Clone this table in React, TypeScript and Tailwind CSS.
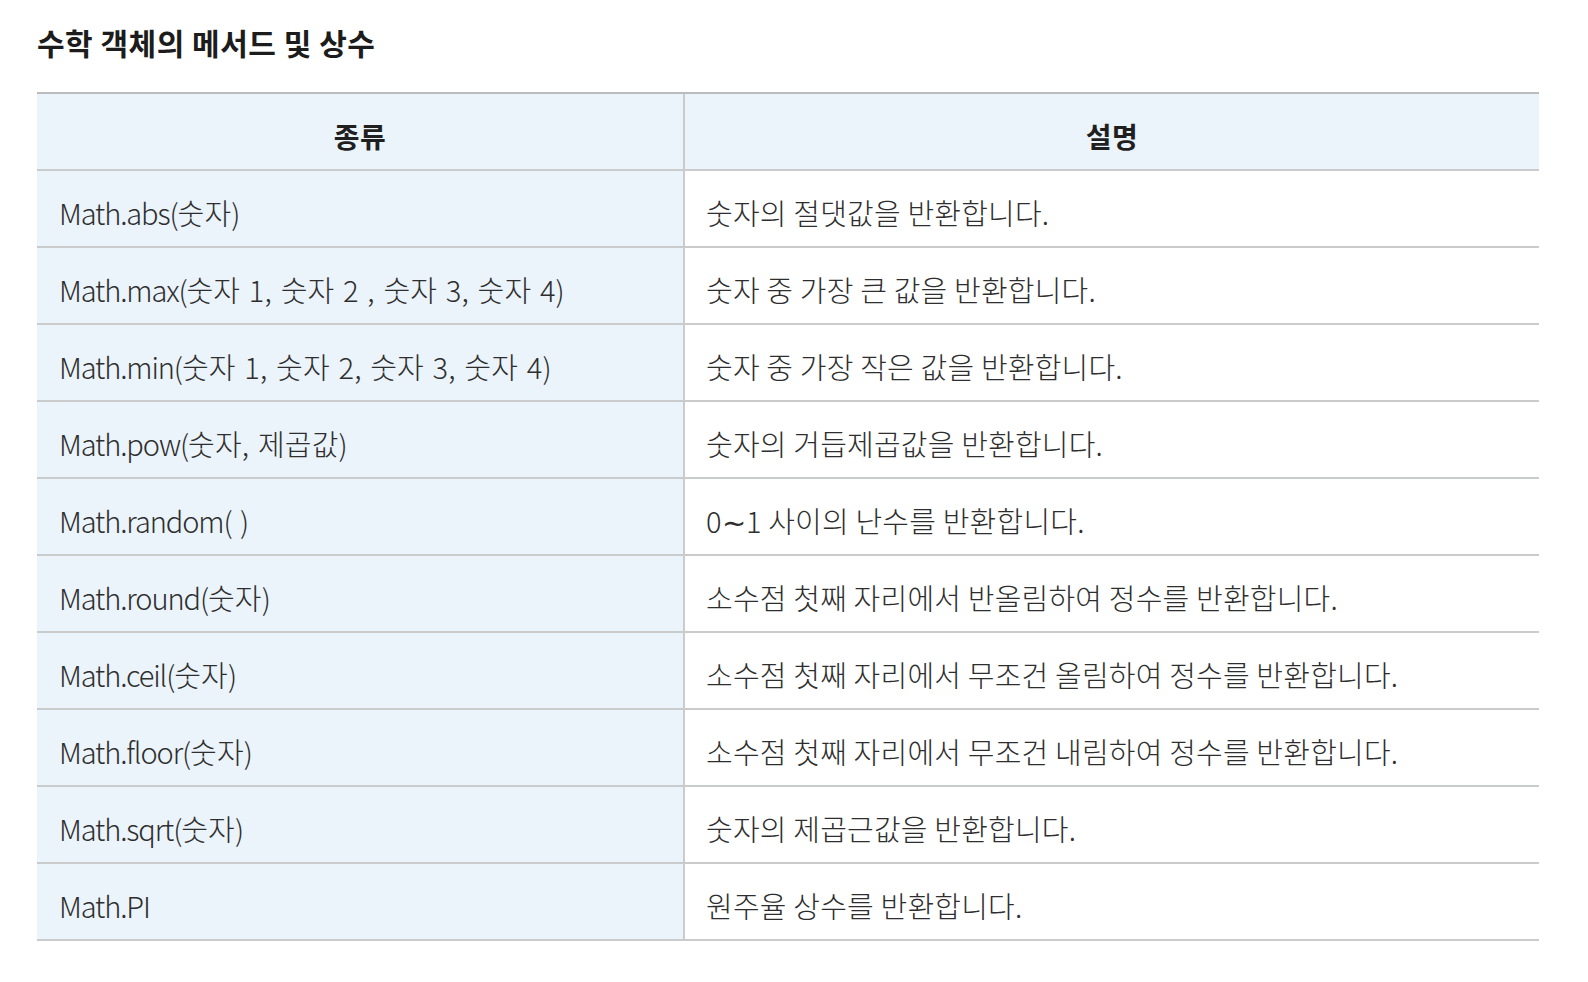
const rows: [string, string][] = [
  ["Math.abs(숫자)", "숫자의 절댓값을 반환합니다."],
  ["Math.max(숫자 1, 숫자 2 , 숫자 3, 숫자 4)", "숫자 중 가장 큰 값을 반환합니다."],
  ["Math.min(숫자 1, 숫자 2, 숫자 3, 숫자 4)", "숫자 중 가장 작은 값을 반환합니다."],
  ["Math.pow(숫자, 제곱값)", "숫자의 거듭제곱값을 반환합니다."],
  ["Math.random( )", "0∼1 사이의 난수를 반환합니다."],
  ["Math.round(숫자)", "소수점 첫째 자리에서 반올림하여 정수를 반환합니다."],
  ["Math.ceil(숫자)", "소수점 첫째 자리에서 무조건 올림하여 정수를 반환합니다."],
  ["Math.floor(숫자)", "소수점 첫째 자리에서 무조건 내림하여 정수를 반환합니다."],
  ["Math.sqrt(숫자)", "숫자의 제곱근값을 반환합니다."],
  ["Math.PI", "원주율 상수를 반환합니다."],
];

function MethodName({ name }: { name: string }) {
  const cut = name.indexOf("(");
  const head = cut === -1 ? name : name.slice(0, cut + 1);
  const rest = cut === -1 ? "" : name.slice(cut + 1);
  return (
    <span className="whitespace-pre">
      <span className="tracking-[-1.1px]">{head}</span>
      <span className="[word-spacing:2px]">{rest}</span>
    </span>
  );
}

export default function App() {
  return (
    <div className="min-h-[982px] w-full bg-white font-['Noto_Sans_CJK_KR','Noto_Sans',sans-serif]">
      <div className="pl-[37px] pr-[49px] pt-[22px]">
        <h1 className="h-[70px] text-[30px] font-bold leading-[40px] tracking-[0.5px] text-[#1c1c1c]">
          수학 객체의 메서드 및 상수
        </h1>
        <div className="border-t-2 border-[#b9bbbd]">
          <div className="flex h-[77px] border-b-2 border-[#c9cbcd] bg-[#ebf3fb]">
            <div className="flex w-[646px] items-center justify-center pt-2 text-[28px] font-bold tracking-[0.5px] text-[#1f1f1f]">
              종류
            </div>
            <div className="w-[2px] bg-[#c9cbcd]" />
            <div className="flex flex-1 items-center justify-center pt-2 text-[28px] font-bold tracking-[0.5px] text-[#1f1f1f]">
              설명
            </div>
          </div>
          {rows.map(([name, desc]) => (
            <div key={name} className="flex h-[77px] border-b-2 border-[#c9cbcd]">
              <div className="flex w-[646px] items-center bg-[#ebf3fb] pl-[22px] pt-2 text-[29px] font-light tracking-[0.2px] text-[#2e2e2e]">
                <MethodName name={name} />
              </div>
              <div className="w-[2px] bg-[#c9cbcd]" />
              <div className="flex flex-1 items-center bg-white pl-[21px] pt-2 text-[29px] font-light tracking-[0.2px] text-[#2e2e2e]">
                {desc}
              </div>
            </div>
          ))}
        </div>
      </div>
    </div>
  );
}
